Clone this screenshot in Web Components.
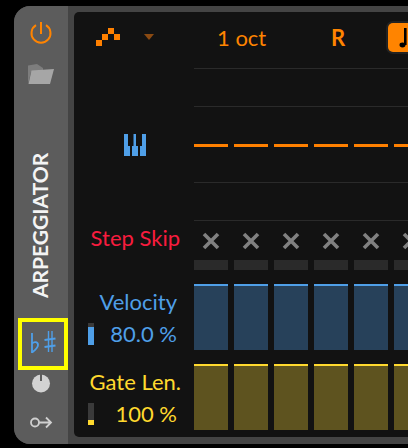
<!DOCTYPE html>
<html>
<head>
<meta charset="utf-8">
<style>
  html, body { margin:0; padding:0; background:#000; overflow:hidden; }
  body { width:408px; height:448px; font-family:Lato, "Liberation Sans", sans-serif; }
</style>
</head>
<body>
<arp-device>
  <arp-sidebar slot="side"></arp-sidebar>
  <arp-toolbar></arp-toolbar>
  <pitch-grid></pitch-grid>
  <skip-row></skip-row>
  <step-row label="Velocity" value="80.0 %" color="#4f9fe8" fill="#27415a" level="18"></step-row>
  <step-row label="Gate Len." value="100 %" color="#ffd92e" fill="#5e531f" level="5" class="gate"></step-row>
</arp-device>

<script>
const STEPS = 6;

function cells(inner) {
  let out = "";
  for (let i = 0; i < STEPS; i++) out += `<div class="cell">${inner}</div>`;
  return out;
}

class ArpDevice extends HTMLElement {
  constructor() {
    super();
    this.attachShadow({ mode: "open" });
    this.shadowRoot.innerHTML = `
      <style>
        :host { display:flex; width:394px; height:438px; margin:6px 0 0 14px; background:#444; border-radius:16px 0 0 16px; overflow:hidden; }
        .panel { flex:1; min-width:0; margin:6px 0 7px 6px; background:#121212; border-radius:5px 0 0 5px; display:flex; flex-direction:column; overflow:hidden; }
      </style>
      <slot name="side"></slot>
      <div class="panel"><slot></slot></div>
    `;
  }
}

class ArpSidebar extends HTMLElement {
  constructor() {
    super();
    this.attachShadow({ mode: "open" });
    this.shadowRoot.innerHTML = `
      <style>
        :host { display:flex; flex-direction:column; align-items:center; flex:none; width:54px; height:438px; background:#5c5c5c; box-sizing:border-box; padding-top:15px; }
        svg { display:block; flex:none; }
        .folder { margin-top:18px; }
        .title { margin-top:68px; height:145px; writing-mode:vertical-rl; transform:rotate(180deg); font-size:21px; font-weight:700; color:#f4f4f4; line-height:24px; white-space:nowrap; text-align:center; margin-left:-2px; }
        .scale { margin-top:20px; margin-left:4px; width:50px; height:52px; box-sizing:border-box; border:4px solid #ffff00; flex:none; }
        .knob { margin-top:4px; }
        .key { margin-top:22px; }
      </style>
      <svg width="24" height="24" viewBox="29 21 24 24" fill="none" stroke="#ff8400" stroke-width="2">
        <path d="M36 25.2A9.5 9.5 0 1 0 46 25.2"/><path d="M41 22V34"/>
      </svg>
      <svg class="folder" width="28" height="22" viewBox="29 63 28 22">
        <path d="M30 65.5L39 64L45 68L45 72L33 72L30 84Z" fill="#7d7d7d"/>
        <path d="M33.5 70.5L56 69L52 84L30.5 84Z" fill="#a6a6a6"/>
      </svg>
      <div class="title">ARPEGGIATOR</div>
      <div class="scale">
        <svg width="42" height="44" viewBox="22 322 42 44" fill="none" stroke="#4f9fe8">
          <path d="M32 333V353" stroke-width="1.8"/>
          <path d="M32 343.5C34.5 341 38 342 38 345C38 348 34.5 350.5 32 352.5" stroke-width="1.8"/>
          <path d="M48.5 331V352M52 331V352" stroke-width="1.4"/>
          <path d="M44.5 340L55.5 338.5M44.5 347L55.5 345.5" stroke-width="2.2"/>
        </svg>
      </div>
      <svg class="knob" width="20" height="20" viewBox="31 374 20 20">
        <circle cx="41" cy="383.5" r="9" fill="#d2d2d2"/>
        <rect x="40" y="374" width="2" height="7" fill="#5c5c5c"/>
      </svg>
      <svg class="key" width="24" height="13" viewBox="29 415 24 13" fill="none" stroke="#cfcfcf" stroke-width="1.8">
        <circle cx="35" cy="421.5" r="4"/><path d="M39 421.5H51M46 416.5L51 421.5L46 426.5"/>
      </svg>
    `;
  }
}

class ArpToolbar extends HTMLElement {
  constructor() {
    super();
    this.attachShadow({ mode: "open" });
    this.shadowRoot.innerHTML = `
      <style>
        :host { display:flex; align-items:center; flex:none; height:50px; margin-bottom:6px; padding-left:22px; color:#ff8400; font-size:22px; }
        svg { display:block; flex:none; }
        .tri { margin-left:24px; margin-right:64px; }
        .oct { width:114px; flex:none; margin-left:-1px; }
        .r { width:57px; flex:none; font-weight:700; margin-left:0; }
        .btn { width:40px; height:29px; flex:none; background:#ff8400; border-radius:5px; box-shadow:0 0 0 2px #222; }
      </style>
      <svg width="24" height="18" viewBox="96 28 24 18" fill="#ff8000">
        <rect x="96" y="40" width="6" height="6"/><rect x="102" y="34" width="6" height="6"/>
        <rect x="108" y="28" width="6" height="6"/><rect x="114" y="34" width="6" height="6"/>
      </svg>
      <svg class="tri" width="10" height="6" viewBox="0 0 10 6"><path d="M0 0H10L5 6Z" fill="#8a4a12"/></svg>
      <span class="oct">1 oct</span>
      <span class="r">R</span>
      <div class="btn">
        <svg width="20" height="29" viewBox="388 22 20 29" fill="#000">
          <ellipse cx="402.5" cy="44" rx="3" ry="2.4"/><rect x="404" y="27" width="2.6" height="17"/>
        </svg>
      </div>
    `;
  }
}

class PitchGrid extends HTMLElement {
  constructor() {
    super();
    this.attachShadow({ mode: "open" });
    this.shadowRoot.innerHTML = `
      <style>
        :host { display:grid; grid-template-columns:120px 1fr; flex:none; height:153px; }
        .keys { display:flex; justify-content:flex-end; padding:66px 48px 0 0; }
        svg { display:block; }
        .lines { display:grid; grid-template-rows:repeat(4,38px) 1px; overflow:hidden; }
        .line { border-top:1px solid #2a2a2a; }
        .notes { display:flex; gap:6px; }
        .cell { flex:none; width:34px; height:3px; background:#ff8000; }
      </style>
      <div class="keys">
        <svg width="22" height="22" viewBox="0 0 22 22" fill="#4f9fe8">
          <path d="M0 0H4V12H6V22H0Z"/><path d="M8 12H9.5V0H12V12H14V22H8Z"/><path d="M18 0H22V22H16V12H18Z"/>
        </svg>
      </div>
      <div class="lines">
        <div class="line"></div>
        <div class="line"></div>
        <div class="notes">${cells("")}</div>
        <div class="line"></div>
        <div class="line"></div>
      </div>
    `;
  }
}

class SkipRow extends HTMLElement {
  constructor() {
    super();
    this.attachShadow({ mode: "open" });
    const x = `<svg width="18" height="18" viewBox="0 0 18 18"><path d="M2 2L16 16M16 2L2 16" stroke="#808080" stroke-width="3.6" fill="none"/></svg>`;
    this.shadowRoot.innerHTML = `
      <style>
        :host { display:grid; grid-template-columns:120px 1fr; flex:none; height:63px; }
        .label { color:#f81c3e; font-size:22px; line-height:26px; text-align:right; padding:4px 14px 0 0; white-space:nowrap; }
        .steps { display:flex; gap:6px; padding-top:11px; }
        .cell { flex:none; width:34px; display:flex; flex-direction:column; align-items:center; }
        svg { display:block; }
        .bar { width:34px; height:10px; margin-top:10px; background:#2a2a2a; }
      </style>
      <div class="label">Step Skip</div>
      <div class="steps">${cells(x + '<div class="bar"></div>')}</div>
    `;
  }
}

class StepRow extends HTMLElement {
  constructor() {
    super();
    this.attachShadow({ mode: "open" });
  }

  connectedCallback() {
    const color = this.getAttribute("color");
    const fill = this.getAttribute("fill");
    const level = this.getAttribute("level");
    this.shadowRoot.innerHTML = `
      <style>
        :host { display:grid; grid-template-columns:120px 1fr; flex:none; height:66px; margin-bottom:14px; color:${color}; font-size:22px; }
        .info { display:flex; flex-direction:column; align-items:flex-end; padding:6px 17px 0 14px; white-space:nowrap; }
        .name { line-height:24px; }
        :host(.gate) .name { margin-right:-4px; }
        .val { display:flex; align-self:stretch; justify-content:space-between; align-items:center; margin-top:8px; line-height:24px; }
        .meter { width:6px; height:22px; background:#3a3a3a; display:flex; align-items:flex-end; }
        .meter div { width:6px; height:${level}px; background:${color}; }
        .steps { display:flex; gap:6px; height:66px; }
        .cell { flex:none; width:34px; box-sizing:border-box; border-top:2px solid ${color}; background:${fill}; }
      </style>
      <div class="info">
        <div class="name">${this.getAttribute("label")}</div>
        <div class="val"><div class="meter"><div></div></div><span>${this.getAttribute("value")}</span></div>
      </div>
      <div class="steps">${cells("")}</div>
    `;
  }
}

customElements.define("arp-device", ArpDevice);
customElements.define("arp-sidebar", ArpSidebar);
customElements.define("arp-toolbar", ArpToolbar);
customElements.define("pitch-grid", PitchGrid);
customElements.define("skip-row", SkipRow);
customElements.define("step-row", StepRow);
</script>
</body>
</html>
